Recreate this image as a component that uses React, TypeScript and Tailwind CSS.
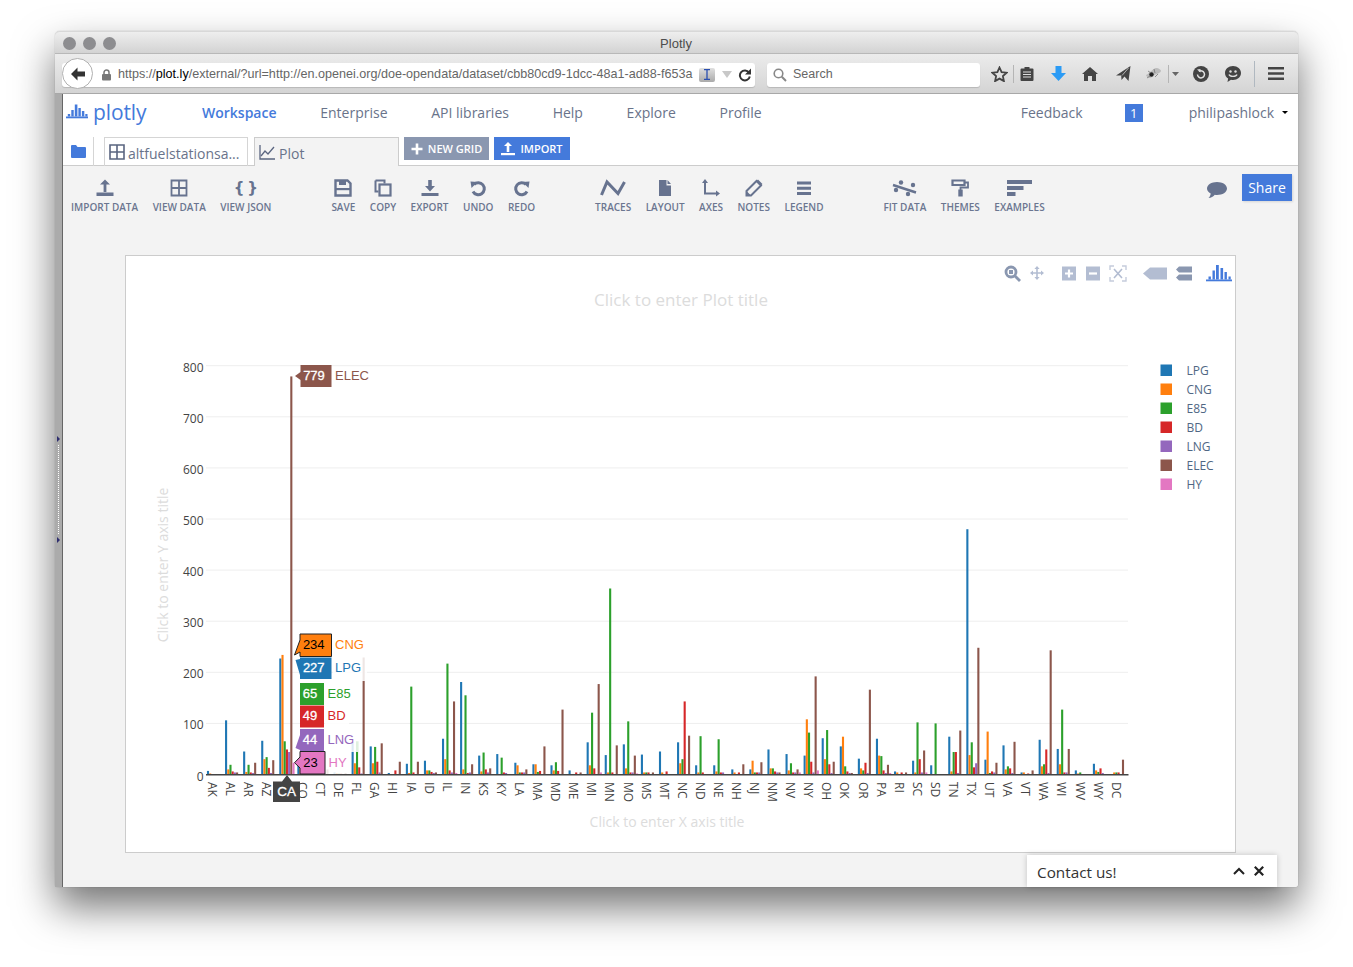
import React from "react";

const OS = "font-['Open_Sans',sans-serif]";
const COLORS = ["#1f77b4", "#ff7f0e", "#2ca02c", "#d62728", "#9467bd", "#8c564b", "#e377c2"];
const NAMES = ["LPG", "CNG", "E85", "BD", "LNG", "ELEC", "HY"];
const DATA: [string, number[]][] = [
  ["AK", [7, 2, 0, 0, 0, 0, 0]],
  ["AL", [106, 10, 19, 6, 4, 4, 0]],
  ["AR", [45, 5, 19, 4, 3, 23, 0]],
  ["AZ", [66, 30, 34, 13, 3, 28, 1]],
  ["CA", [227, 234, 65, 49, 44, 779, 23]],
  ["CO", [25, 20, 30, 8, 4, 20, 0]],
  ["CT", [16, 8, 3, 4, 2, 10, 0]],
  ["DE", [4, 3, 2, 2, 1, 3, 0]],
  ["FL", [63, 22, 65, 14, 2, 229, 0]],
  ["GA", [55, 22, 54, 25, 4, 61, 0]],
  ["HI", [3, 1, 0, 8, 0, 25, 0]],
  ["IA", [21, 3, 172, 4, 0, 25, 0]],
  ["ID", [27, 8, 8, 5, 3, 4, 0]],
  ["IL", [70, 30, 217, 8, 4, 143, 3]],
  ["IN", [181, 10, 155, 3, 4, 20, 0]],
  ["KS", [37, 6, 43, 10, 4, 12, 0]],
  ["KY", [40, 1, 33, 4, 3, 0, 1]],
  ["LA", [23, 18, 4, 4, 4, 10, 0]],
  ["MA", [20, 20, 5, 7, 1, 55, 1]],
  ["MD", [18, 8, 24, 7, 1, 127, 0]],
  ["ME", [8, 1, 1, 4, 0, 4, 0]],
  ["MI", [63, 18, 121, 12, 1, 177, 4]],
  ["MN", [38, 4, 364, 4, 0, 57, 0]],
  ["MO", [59, 12, 104, 4, 4, 37, 2]],
  ["MS", [39, 4, 4, 4, 0, 4, 0]],
  ["MT", [45, 4, 0, 6, 0, 0, 0]],
  ["NC", [63, 22, 30, 143, 0, 76, 0]],
  ["ND", [18, 4, 75, 4, 0, 0, 1]],
  ["NE", [18, 6, 69, 4, 4, 0, 0]],
  ["NH", [10, 4, 0, 4, 0, 20, 0]],
  ["NJ", [10, 27, 4, 4, 4, 24, 0]],
  ["NM", [49, 12, 12, 6, 4, 4, 0]],
  ["NV", [40, 8, 22, 4, 4, 10, 4]],
  ["NY", [37, 108, 82, 25, 4, 192, 8]],
  ["OH", [71, 30, 87, 20, 3, 25, 1]],
  ["OK", [55, 74, 16, 6, 3, 3, 0]],
  ["OR", [31, 12, 8, 23, 3, 166, 0]],
  ["PA", [70, 37, 36, 8, 3, 19, 3]],
  ["RI", [6, 4, 0, 4, 0, 4, 0]],
  ["SC", [27, 4, 102, 30, 4, 47, 4]],
  ["SD", [18, 0, 100, 0, 0, 0, 1]],
  ["TN", [74, 6, 44, 44, 3, 86, 0]],
  ["TX", [480, 38, 63, 14, 22, 248, 0]],
  ["UT", [29, 84, 3, 6, 4, 23, 0]],
  ["VA", [57, 10, 16, 12, 3, 64, 0]],
  ["VT", [4, 4, 0, 2, 0, 8, 1]],
  ["WA", [68, 16, 20, 49, 3, 243, 0]],
  ["WI", [50, 20, 127, 4, 4, 50, 0]],
  ["WV", [8, 2, 4, 0, 0, 0, 0]],
  ["WY", [21, 8, 5, 12, 3, 0, 0]],
  ["DC", [0, 4, 4, 4, 0, 29, 0]],
];

const BASE = 774.5;
const U = 0.511;
const G = "#67738f";

function Chart() {
  const sans = { fontFamily: "'Open Sans',sans-serif" };
  const arial = { fontFamily: "'Liberation Sans',sans-serif" };
  const labels = [
    { name: "ELEC", val: "779", c: COLORS[5], x1: 300.5, x2: 331.5, y1: 365, y2: 387, tip: [295, 376], tail: [372, 380], tc: "#fff", border: false, halo: null },
    { name: "CNG", val: "234", c: COLORS[1], x1: 300, x2: 331.5, y1: 634, y2: 656.5, tip: [294.5, 655], tail: [640, 652], tc: "#000", border: true, halo: [333, 634, 33, 22] },
    { name: "LPG", val: "227", c: COLORS[0], x1: 300, x2: 331.5, y1: 657.5, y2: 679, tip: [295.5, 660], tail: [659, 675], tc: "#fff", border: false, halo: [333, 657, 34, 24] },
    { name: "E85", val: "65", c: COLORS[2], x1: 300, x2: 324, y1: 683, y2: 705, tip: null, tail: null, tc: "#fff", border: false, halo: [325, 683, 30, 22] },
    { name: "BD", val: "49", c: COLORS[3], x1: 300, x2: 324, y1: 705.5, y2: 727.5, tip: null, tail: null, tc: "#fff", border: false, halo: [325, 706, 24, 22] },
    { name: "LNG", val: "44", c: COLORS[4], x1: 300, x2: 324, y1: 729, y2: 751, tip: [295.5, 748], tail: [735, 750], tc: "#fff", border: false, halo: [325, 729, 33, 23] },
    { name: "HY", val: "23", c: COLORS[6], x1: 300, x2: 325, y1: 751.5, y2: 774, tip: [294.5, 762.7], tail: [757, 768], tc: "#000", border: true, halo: [325, 752, 24, 22] },
  ];
  return (
    <svg viewBox="126 256 1109 596" className="block w-[1109px] h-[596px]">
      {/* titles */}
      <text x="681" y="306" textAnchor="middle" fontSize="17" fill="#dcdcdc" style={sans}>Click to enter Plot title</text>
      <text x="667" y="827" textAnchor="middle" fontSize="14" fill="#dcdcdc" style={sans}>Click to enter X axis title</text>
      <text transform="translate(168,565) rotate(-90)" textAnchor="middle" fontSize="14" fill="#dcdcdc" style={sans}>Click to enter Y axis title</text>
      {/* grid */}
      {[100, 200, 300, 400, 500, 600, 700, 800].map((v) => (
        <line key={v} x1="206" x2="1128" y1={BASE - v * U} y2={BASE - v * U} stroke="#eeeeee" strokeWidth="1" />
      ))}
      {[0, 100, 200, 300, 400, 500, 600, 700, 800].map((v) => (
        <text key={v} x="203.5" y={BASE - v * U + 6} textAnchor="end" fontSize="12" fill="#444" style={sans}>{v}</text>
      ))}
      {/* bars */}
      {DATA.map(([st, vals], s) => {
        const cx = 214.6 + s * 18.08;
        return (
          <g key={st}>
            {vals.map((v, i) =>
              v > 0 ? (
                <rect key={i} x={cx + (i - 3) * 2.2 - 1.05} y={BASE - v * U} width="2.1" height={v * U} fill={COLORS[i]} />
              ) : null
            )}
            <text transform={`translate(${212 + s * 18.08},782) rotate(90)`} dy="0.36em" fontSize="12" fill="#444" style={sans}>{st}</text>
          </g>
        );
      })}
      <line x1="206" x2="1128.5" y1="774.8" y2="774.8" stroke="#444" strokeWidth="1.4" />
      {/* legend */}
      {NAMES.map((n, i) => (
        <g key={n}>
          <rect x="1160.5" y={364.5 + i * 19} width="11.5" height="11.5" fill={COLORS[i]} />
          <text x="1186.5" y={374.8 + i * 19} fontSize="12" fill="#506784" style={sans}>{n}</text>
        </g>
      ))}
      {/* hover labels */}
      {labels.map((l) => (
        <g key={l.name}>
          {l.halo && <rect x={l.halo[0]} y={l.halo[1]} width={l.halo[2]} height={l.halo[3]} fill="#fff" fillOpacity="0.85" />}
          <path
            d={
              l.tip
                ? `M${l.x1} ${l.y1}H${l.x2}V${l.y2}H${l.x1}V${l.tail![1]}L${l.tip[0]} ${l.tip[1]}L${l.x1} ${l.tail![0]}Z`
                : `M${l.x1} ${l.y1}H${l.x2}V${l.y2}H${l.x1}Z`
            }
            fill={l.c}
            stroke={l.border ? "#222" : "none"}
            strokeWidth="1"
          />
          <text x={(l.x1 + l.x2) / 2 - 2} y={(l.y1 + l.y2) / 2 + 3.9} textAnchor="middle" fontSize="13" fill={l.tc} stroke={l.tc} strokeWidth={l.tc === "#fff" ? 0.3 : 0} style={arial}>{l.val}</text>
          <text x={l.x2 + 3.5} y={(l.y1 + l.y2) / 2 + 3.9} fontSize="13" fill={l.c} style={arial}>{l.name}</text>
        </g>
      ))}
      {/* x hover */}
      <path d="M273 781.5H282L287 775L292 781.5H300V802H273Z" fill="#444" />
      <text x="286.7" y="796" textAnchor="middle" fontSize="13.5" fill="#fff" stroke="#fff" strokeWidth="0.3" style={arial}>CA</text>
      {/* modebar */}
      <g>
        <circle cx="1011" cy="272" r="5" fill="none" stroke="#8a97b0" strokeWidth="2.8" />
        <rect x="1009" y="270" width="4" height="4" fill="#8a97b0" />
        <line x1="1015" y1="276" x2="1020" y2="281" stroke="#8a97b0" strokeWidth="2.8" />
        <path d="M1037 266l2.6 3h-1.8v3.2H1041v-1.8l3 2.6-3 2.6v-1.8h-3.2v3.2h1.8l-2.6 3-2.6-3h1.8v-3.2H1033v1.8l-3-2.6 3-2.6v1.8h3.2V269h-1.8z" fill="#b3bdd2" />
        <rect x="1062" y="266.5" width="14" height="14" fill="#b3bdd2" />
        <path d="M1069 269.5v8M1065 273.5h8" stroke="#fff" strokeWidth="2.2" />
        <rect x="1086" y="266.5" width="14" height="14" fill="#b3bdd2" />
        <path d="M1089 273.5h8" stroke="#fff" strokeWidth="2.2" />
        <path d="M1110 270v-4h4M1122 266h4v4M1126 277v4h-4M1114 281h-4v-4" fill="none" stroke="#c5ccdc" strokeWidth="1.4" />
        <path d="M1114 269l8 9M1122 269l-8 9" stroke="#b3bdd2" strokeWidth="1.6" />
        <path d="M1143 273.5l7-6h17v12h-17z" fill="#b3bdd2" />
        <path d="M1179 266.5h13v6h-13l-3-3zM1179 274.5h13v6h-13l-3-3z" fill="#8a97b0" />
        <g fill="#447adb">
          <rect x="1206" y="279.5" width="26" height="1.8" />
          <rect x="1208.5" y="276.5" width="2.4" height="3" />
          <rect x="1212.5" y="270.5" width="2.4" height="9" />
          <rect x="1216" y="265" width="2.8" height="14.5" />
          <rect x="1220.5" y="268" width="2.6" height="11.5" />
          <rect x="1224.5" y="272" width="2.4" height="7.5" />
          <rect x="1228.5" y="276.5" width="2.2" height="3" />
        </g>
      </g>
    </svg>
  );
}

const Svg = ({ w, h, children }: { w: number; h: number; children: React.ReactNode }) => (
  <svg width={w} height={h} viewBox={`0 0 ${w} ${h}`} className="block">{children}</svg>
);

const Icons: Record<string, React.ReactNode> = {
  import: (
    <Svg w={18} h={18}>
      <path d="M9 0.500l5 5h-3.600v7.500H7.600V5.500H4z" fill={G} />
      <rect x="0.500" y="13.500" width="17" height="3.500" fill={G} />
    </Svg>
  ),
  grid: (
    <Svg w={18} h={18}>
      <path d="M1.500 1.500h15v15h-15zM9 1.500v15M1.500 9h15" fill="none" stroke={G} strokeWidth="1.800" />
    </Svg>
  ),
  save: (
    <Svg w={18} h={18}>
      <path d="M1.500 1.500h12l3 3v12h-15z" fill="none" stroke={G} strokeWidth="2.400" />
      <rect x="5" y="1" width="7" height="5" fill={G} />
      <rect x="1" y="9" width="16" height="2.200" fill={G} />
    </Svg>
  ),
  copy: (
    <Svg w={18} h={18}>
      <path d="M1.500 1.500h9v3M4.500 12.500h-3v-11" fill="none" stroke={G} strokeWidth="2" />
      <rect x="5.500" y="5.500" width="11" height="11" fill="none" stroke={G} strokeWidth="2.200" />
    </Svg>
  ),
  export: (
    <Svg w={18} h={18}>
      <path d="M7.200 1h3.600v6H14l-5 5.500L4 7h3.200z" fill={G} />
      <rect x="0.500" y="14" width="17" height="3" fill={G} />
    </Svg>
  ),
  undo: (
    <Svg w={18} h={18}>
      <path d="M5 5.500a6 6 0 1 1-1 7" fill="none" stroke={G} strokeWidth="3" />
      <path d="M1.500 2.500l7 .5-6 6z" fill={G} />
    </Svg>
  ),
  redo: (
    <Svg w={18} h={18}>
      <path d="M13 5.500a6 6 0 1 0 1 7" fill="none" stroke={G} strokeWidth="3" />
      <path d="M16.500 2.500l-7 .5 6 6z" fill={G} />
    </Svg>
  ),
  traces: (
    <Svg w={26} h={18}>
      <path d="M1.500 16L7 3l11 11.500L24.500 3" fill="none" stroke={G} strokeWidth="3" />
    </Svg>
  ),
  layout: (
    <Svg w={18} h={18}>
      <path d="M3 1h7.500v5.500H15V17H3zM11.500 1L15 5h-3.500z" fill={G} />
    </Svg>
  ),
  axes: (
    <Svg w={18} h={18}>
      <path d="M3 2.500V14.500H15" fill="none" stroke={G} strokeWidth="2" />
      <path d="M3 0l3 4H0zM18 14.500l-4 3v-6z" fill={G} />
    </Svg>
  ),
  notes: (
    <Svg w={18} h={18}>
      <path d="M1.500 12L11.500 2l4.500 4.500-10 10H1.500z" fill="none" stroke={G} strokeWidth="2" />
      <path d="M1.500 12l4.500 4.500H1.500zM11.500 2l1.500-1.500 4.500 4.500L16 6.500z" fill={G} />
    </Svg>
  ),
  legend: (
    <Svg w={18} h={18}>
      <path d="M2 2.500h14v3H2zM2 7.700h14v3H2zM2 13h14v3H2z" fill={G} />
    </Svg>
  ),
  fit: (
    <Svg w={26} h={18}>
      <path d="M1 6l23 7.500" stroke={G} strokeWidth="2.400" />
      <circle cx="9" cy="3.500" r="2.200" fill={G} />
      <circle cx="21" cy="6" r="2.200" fill={G} />
      <circle cx="4" cy="11" r="2.200" fill={G} />
      <circle cx="16" cy="15" r="2.200" fill={G} />
    </Svg>
  ),
  themes: (
    <Svg w={18} h={18}>
      <path d="M1.500 1.500h12v4.500h-12z" fill="none" stroke={G} strokeWidth="2.200" />
      <path d="M14 3.500h3v5H9.500V11" fill="none" stroke={G} strokeWidth="1.800" />
      <rect x="7.300" y="10.500" width="4.400" height="7" fill={G} />
    </Svg>
  ),
  examples: (
    <Svg w={25} h={18}>
      <path d="M0 1h25v4H0zM0 7h16.500v4H0zM0 13h8.500v4H0z" fill={G} />
    </Svg>
  ),
};

function Tool({ icon, label }: { icon: string; label: string }) {
  return (
    <div className="flex flex-col items-center">
      <div className="h-[20px] flex items-center justify-center">
        {icon === "json" ? (
          <span className="text-[15px] font-bold leading-[20px] tracking-[3px] pl-[3px] text-[#67738f] font-['DejaVu_Sans',sans-serif]">{"{}"}</span>
        ) : (
          Icons[icon]
        )}
      </div>
      <span className={`mt-[2px] text-[10px] leading-[14px] font-semibold text-[#6b7690] whitespace-nowrap ${OS}`}>{label}</span>
    </div>
  );
}

const D = "#444444";

function BrowserBar() {
  return (
    <div className="relative h-[41px] flex items-center bg-gradient-to-b from-[#ececec] to-[#d4d4d4] border-b border-[#a8a8a8] border-t border-t-[#b8b8b8]">
      {/* back button */}
      <div className="absolute left-[7px] top-[4px] w-[31px] h-[31px] rounded-full bg-white border border-[#b0b0b0] flex items-center justify-center z-10">
        <svg width="16" height="14" viewBox="0 0 16 14"><path d="M7.500 0.500L1 7l6.500 6.500V9.400H15V4.600H7.500z" fill="#333" /></svg>
      </div>
      {/* url bar */}
      <div className="ml-[7px] mt-[2px] w-[693px] h-[24px] bg-white rounded-[3px] flex items-center pl-[39px] pr-[5px] shadow-[0_1px_1px_rgba(0,0,0,0.15)] font-['Liberation_Sans',sans-serif] text-[12.6px]">
        <svg width="11" height="12" viewBox="0 0 11 12" className="shrink-0"><path d="M3 5.500V3.500a2.500 2.500 0 0 1 5 0v2" fill="none" stroke="#777" strokeWidth="1.500" /><rect x="1" y="5" width="9" height="6.500" rx="1" fill="#777" /></svg>
        <span className="ml-[6px] whitespace-nowrap text-[#666]">https://<span className="text-black">plot.ly</span>/external/?url=http://en.openei.org/doe-opendata/dataset/cbb80cd9-1dcc-48a1-ad88-f653a</span>
        <span className="ml-[6px] w-[16px] h-[14px] rounded-[2px] bg-gradient-to-b from-[#e0e0e0] to-[#aaa] flex items-center justify-center shrink-0">
          <svg width="6" height="11" viewBox="0 0 6 11"><path d="M0 .5h6M0 10.500h6M3 .5v10" stroke="#2a4fb0" strokeWidth="1.300" /></svg>
        </span>
        <svg width="10" height="7" viewBox="0 0 10 7" className="ml-[7px] shrink-0"><path d="M0 0h10L5 7z" fill="#c8c8c8" /></svg>
        <svg width="14" height="14" viewBox="0 0 14 14" className="ml-[6px] shrink-0"><path d="M11 4.500a5 5 0 1 0 .8 4" fill="none" stroke="#333" strokeWidth="2" /><path d="M13 .5v6H7z" fill="#333" /></svg>
      </div>
      {/* search */}
      <div className="ml-[12px] mt-[2px] w-[213px] h-[24px] bg-white rounded-[3px] flex items-center pl-[6px] shadow-[0_1px_1px_rgba(0,0,0,0.15)]">
        <svg width="14" height="14" viewBox="0 0 14 14"><circle cx="5.500" cy="5.500" r="4.300" fill="none" stroke="#888" strokeWidth="1.600" /><path d="M8.800 8.800L13 13" stroke="#888" strokeWidth="2" /></svg>
        <span className="ml-[6px] text-[12.5px] text-[#666] font-['Liberation_Sans',sans-serif]">Search</span>
      </div>
      {/* tool icons */}
      <div className="ml-[5px] flex items-center h-full">
        <div className="w-[28px] flex justify-center">
          <svg width="17" height="16" viewBox="0 0 17 16"><path d="M8.500 1.500l2.100 4.600 5 .6-3.700 3.400 1 5-4.400-2.500-4.400 2.500 1-5L1.400 6.700l5-.6z" fill="none" stroke={D} strokeWidth="1.800" /></svg>
        </div>
        <div className="w-px h-[18px] bg-[#b5b5b5]" />
        <div className="w-[26px] flex justify-center">
          <svg width="14" height="15" viewBox="0 0 14 15"><path d="M1.500 2.500h3V1h5v1.500h3a1 1 0 0 1 1 1V14a1 1 0 0 1-1 1h-11a1 1 0 0 1-1-1V3.500a1 1 0 0 1 1-1z" fill={D} /><path d="M3 6h8M3 8.500h8M3 11h8" stroke="#ddd" strokeWidth="1" /></svg>
        </div>
        <div className="w-[36px] flex justify-center">
          <svg width="15" height="15" viewBox="0 0 15 15"><path d="M4.500 0h6v7H15l-7.500 8L0 7h4.500z" fill="#2b9bf5" /></svg>
        </div>
        <div className="w-[28px] flex justify-center">
          <svg width="16" height="14" viewBox="0 0 16 14"><path d="M8 0l8 7h-2v7h-4V9H6v5H2V7H0z" fill={D} /></svg>
        </div>
        <div className="w-[38px] flex justify-center">
          <svg width="15" height="15" viewBox="0 0 15 15"><path d="M14.500 0L12.500 15 8.500 10.500 5.500 14 5.200 9.500 0 9.500z" fill={D} /><path d="M12.500 2L6 9.500" stroke="#ccc" strokeWidth=".8" /></svg>
        </div>
        <div className="w-[22px] flex justify-center">
          <svg width="17" height="14" viewBox="0 0 17 14"><path d="M1 8c3-1 6-6 10-7 3 0 5 2 5 3-1 3-7 3-9 6-2 2-5 1-6-2z" fill="#bbb" /><circle cx="6.500" cy="7.500" r="2.200" fill="#222" /><path d="M3 4l3 2M9 2l1 4M13 7l-3 3M2 11l3-2" stroke="#777" strokeWidth=".8" /></svg>
        </div>
        <div className="w-[4px]" />
        <div className="w-px h-[18px] bg-[#b5b5b5]" />
        <div className="w-[12px] flex justify-center">
          <svg width="7" height="4" viewBox="0 0 7 4"><path d="M0 0h7L3.500 4z" fill="#666" /></svg>
        </div>
        <div className="w-[40px] flex justify-center">
          <svg width="16" height="16" viewBox="0 0 16 16"><circle cx="8" cy="8" r="8" fill={D} /><path d="M6 5.500a3.500 3.500 0 1 1-1.500 3" fill="none" stroke="#e0e0e0" strokeWidth="1.500" /><path d="M4 3.500l3.500-.5v3.500z" fill="#e0e0e0" /></svg>
        </div>
        <div className="w-[24px] flex justify-center">
          <svg width="16" height="16" viewBox="0 0 16 16"><path d="M8 0c4.500 0 8 3 8 7s-3.500 7-8 7c-.7 0-1.400-.1-2-.2L2.500 16l.6-3.400C1.200 11.300 0 9.300 0 7c0-4 3.500-7 8-7z" fill={D} /><circle cx="5.500" cy="5.500" r="1.200" fill="#ddd" /><circle cx="10.500" cy="5.500" r="1.200" fill="#ddd" /><path d="M4 8.500c1 2.500 7 2.500 8 0" fill="none" stroke="#ddd" strokeWidth="1.400" /></svg>
        </div>
        <div className="w-[9px]" />
        <div className="w-px h-[26px] bg-[#b0b8c0]" />
        <div className="w-[42px] flex justify-center">
          <svg width="16" height="13" viewBox="0 0 16 13"><path d="M0 1.200h16M0 6.500h16M0 11.800h16" stroke={D} strokeWidth="2.400" strokeLinecap="round" /></svg>
        </div>
      </div>
    </div>
  );
}

const NavLink = ({ children, active }: { children: React.ReactNode; active?: boolean }) => (
  <span className={active ? "font-semibold text-[#447adb]" : "text-[#69738a]"}>{children}</span>
);

export default function App() {
  return (
    <div className="w-[1353px] h-[967px] bg-white pt-[31px] pl-[55px] overflow-hidden font-['Open_Sans',sans-serif]">
      <div className="relative w-[1243px] h-[856px] flex flex-col rounded-t-[5px] rounded-b-[3px] shadow-[0_20px_40px_rgba(0,0,0,0.55),0_0_1px_rgba(0,0,0,0.4)]">
        {/* title bar */}
        <div className="relative h-[22px] flex items-center justify-center rounded-t-[5px] bg-gradient-to-b from-[#eeeeee] to-[#d3d3d3] border-t border-[#d8d8d8]">
          <div className="absolute left-[8px] top-[5px] flex gap-[7px]">
            <span className="w-[13px] h-[13px] rounded-full bg-[#8d8d90]" />
            <span className="w-[13px] h-[13px] rounded-full bg-[#8d8d90]" />
            <span className="w-[13px] h-[13px] rounded-full bg-[#8d8d90]" />
          </div>
          <span className="text-[13px] text-[#4d4d4d] font-['Liberation_Sans',sans-serif] ml-[-1px] mt-[2px]">Plotly</span>
        </div>
        <BrowserBar />

        <div className="flex-1 flex min-h-0">
          {/* side strip */}
          <div className="w-[8px] bg-[#ababab] border-r border-[#666] flex flex-col items-center pt-[342px] pr-[1px]">
            <div className="w-0 h-0 border-y-[3px] border-y-transparent border-l-[3px] border-l-[#2e2e6e]" />
            <div className="mt-[3px] h-[89px] border-l border-dotted border-white" />
            <div className="mt-[3px] w-0 h-0 border-y-[3px] border-y-transparent border-l-[3px] border-l-[#2e2e6e]" />
          </div>

          <div className="relative flex-1 flex flex-col bg-[#f3f3f3] rounded-br-[3px] min-w-0">
            {/* nav */}
            <div className="h-[43px] bg-white flex items-center text-[14px] pl-[3px] pb-[6px] shrink-0">
              <svg width="22" height="18" viewBox="0 0 22 18" className="shrink-0 -mt-[2px]">
                <g fill="#447adb">
                  <rect x="0" y="13.500" width="22" height="1.800" />
                  <rect x="1.800" y="11" width="2.400" height="2.500" />
                  <rect x="5.300" y="7" width="2.400" height="6.500" />
                  <rect x="8.800" y="1.500" width="2.600" height="12" />
                  <rect x="12.400" y="5" width="2.400" height="8.500" />
                  <rect x="15.900" y="8" width="2.400" height="5.500" />
                  <rect x="19.300" y="11" width="2.200" height="2.500" />
                </g>
              </svg>
              <span className="ml-[5px] text-[21px] leading-none text-[#447adb] tracking-[-0.1px] w-[109px] -mt-[1px]">plotly</span>
              <div className="flex gap-[43.7px]">
                <NavLink active>Workspace</NavLink>
                <NavLink>Enterprise</NavLink>
                <NavLink>API libraries</NavLink>
                <NavLink>Help</NavLink>
                <NavLink>Explore</NavLink>
                <NavLink>Profile</NavLink>
              </div>
              <div className="ml-auto flex items-center pr-[10px]">
                <NavLink>Feedback</NavLink>
                <span className="ml-[42px] w-[18px] h-[18px] bg-[#447adb] text-white text-[13px] leading-[18px] text-center">1</span>
                <span className="ml-[46px]"><NavLink>philipashlock</NavLink></span>
                <span className="ml-[8px] w-0 h-0 border-x-[3px] border-x-transparent border-t-[3px] border-t-black" />
              </div>
            </div>

            {/* tabs */}
            <div className="h-[29px] bg-white border-b border-[#cccccc] flex items-start shrink-0">
              <div className="w-[31px] h-[29px] border-r border-[#d5d5d5] flex items-center justify-center">
                <svg width="15" height="13" viewBox="0 0 15 13"><path d="M0 1a1 1 0 0 1 1-1h4l1.500 2H14a1 1 0 0 1 1 1v9a1 1 0 0 1-1 1H1a1 1 0 0 1-1-1z" fill="#447adb" /></svg>
              </div>
              <div className="ml-[10px] w-[144px] h-[29px] border border-b-0 border-[#d5d5d5] flex items-center pl-[4px] text-[14px] text-[#69738a]">
                <svg width="16" height="16" viewBox="0 0 16 16"><path d="M1 1h14v14H1zM8 1v14M1 8h14" fill="none" stroke="#5a6580" strokeWidth="1.600" /></svg>
                <span className="ml-[3px] mt-[2px] whitespace-nowrap">altfuelstationsa...</span>
              </div>
              <div className="ml-[6px] w-[145px] h-[29px] relative z-10 bg-[#f3f3f3] border border-b-0 border-[#cccccc] flex items-center pl-[4px] text-[14px] text-[#69738a]">
                <svg width="17" height="16" viewBox="0 0 17 16"><path d="M1 1v14h15" fill="none" stroke="#5a6580" strokeWidth="1.300" /><path d="M2 12l4-5 3 3 6-7" fill="none" stroke="#5a6580" strokeWidth="1.300" /></svg>
                <span className="ml-[3px] mt-[2px]">Plot</span>
              </div>
              <div className="ml-[5px] flex gap-[5px]">
                <button className="w-[85px] h-[23px] pt-[1px] bg-[#8a97b0] text-white text-[11px] font-semibold flex items-center justify-center gap-[5px]">
                  <svg width="12" height="12" viewBox="0 0 12 12"><path d="M6 .5v11M.5 6h11" stroke="#fff" strokeWidth="2.600" /></svg>
                  NEW GRID
                </button>
                <button className="w-[76px] h-[23px] pt-[1px] bg-[#447adb] text-white text-[11px] font-semibold flex items-center justify-center gap-[5px]">
                  <svg width="14" height="14" viewBox="0 0 14 14"><path d="M7 0l4 4H8.300v6H5.700V4H3z" fill="#fff" /><rect x="0" y="11" width="14" height="2.200" fill="#fff" /></svg>
                  IMPORT
                </button>
              </div>
            </div>

            {/* toolbar */}
            <div className="h-[89px] pt-[12px] pl-[8px] pr-[6px] flex items-start shrink-0">
              <div className="flex gap-[60px]">
                <div className="flex gap-[14.5px]">
                  <Tool icon="import" label="IMPORT DATA" />
                  <Tool icon="grid" label="VIEW DATA" />
                  <Tool icon="json" label="VIEW JSON" />
                </div>
                <div className="flex gap-[14.5px]">
                  <Tool icon="save" label="SAVE" />
                  <Tool icon="copy" label="COPY" />
                  <Tool icon="export" label="EXPORT" />
                  <Tool icon="undo" label="UNDO" />
                  <Tool icon="redo" label="REDO" />
                </div>
                <div className="flex gap-[14.5px]">
                  <Tool icon="traces" label="TRACES" />
                  <Tool icon="layout" label="LAYOUT" />
                  <Tool icon="axes" label="AXES" />
                  <Tool icon="notes" label="NOTES" />
                  <Tool icon="legend" label="LEGEND" />
                </div>
                <div className="flex gap-[14.5px]">
                  <Tool icon="fit" label="FIT DATA" />
                  <Tool icon="themes" label="THEMES" />
                  <Tool icon="examples" label="EXAMPLES" />
                </div>
              </div>
              <div className="ml-auto -mt-[4px] flex items-start">
                <svg width="20" height="17" viewBox="0 0 20 17" className="mt-[8px]"><path d="M10 0c5.500 0 10 2.800 10 6.500S15.500 13 10 13c-.8 0-1.500-.1-2.200-.2C6.500 14.500 4 16 1.500 16c1-1 2-2.500 2.200-4.500C1.400 10.300 0 8.500 0 6.500 0 2.800 4.500 0 10 0z" fill="#67738f" /></svg>
                <button className="ml-[15px] w-[50px] h-[27px] bg-[#447adb] text-white text-[14px] font-medium shadow-[1px_1px_2px_rgba(0,0,0,0.12)]">Share</button>
              </div>
            </div>

            {/* plot card */}
            <div className="ml-[62px] w-[1111px] h-[598px] bg-white border border-[#cccccc] shrink-0">
              <Chart />
            </div>

            {/* contact */}
            <div className="absolute right-[21px] bottom-0 w-[250px] h-[32px] bg-white flex items-center pl-[10px] pr-[13px] shadow-[0_0_6px_rgba(0,0,0,0.2)]">
              <span className="text-[15.3px] text-[#333] mt-[2px]">Contact us!</span>
              <svg width="12" height="8" viewBox="0 0 12 8" className="ml-auto"><path d="M1 7l5-5 5 5" fill="none" stroke="#222" strokeWidth="2" /></svg>
              <svg width="10" height="10" viewBox="0 0 10 10" className="ml-[9px]"><path d="M.8.8l8.400 8.400M9.200.8L.8 9.200" stroke="#222" strokeWidth="2.200" /></svg>
            </div>
          </div>
        </div>
      </div>
    </div>
  );
}
